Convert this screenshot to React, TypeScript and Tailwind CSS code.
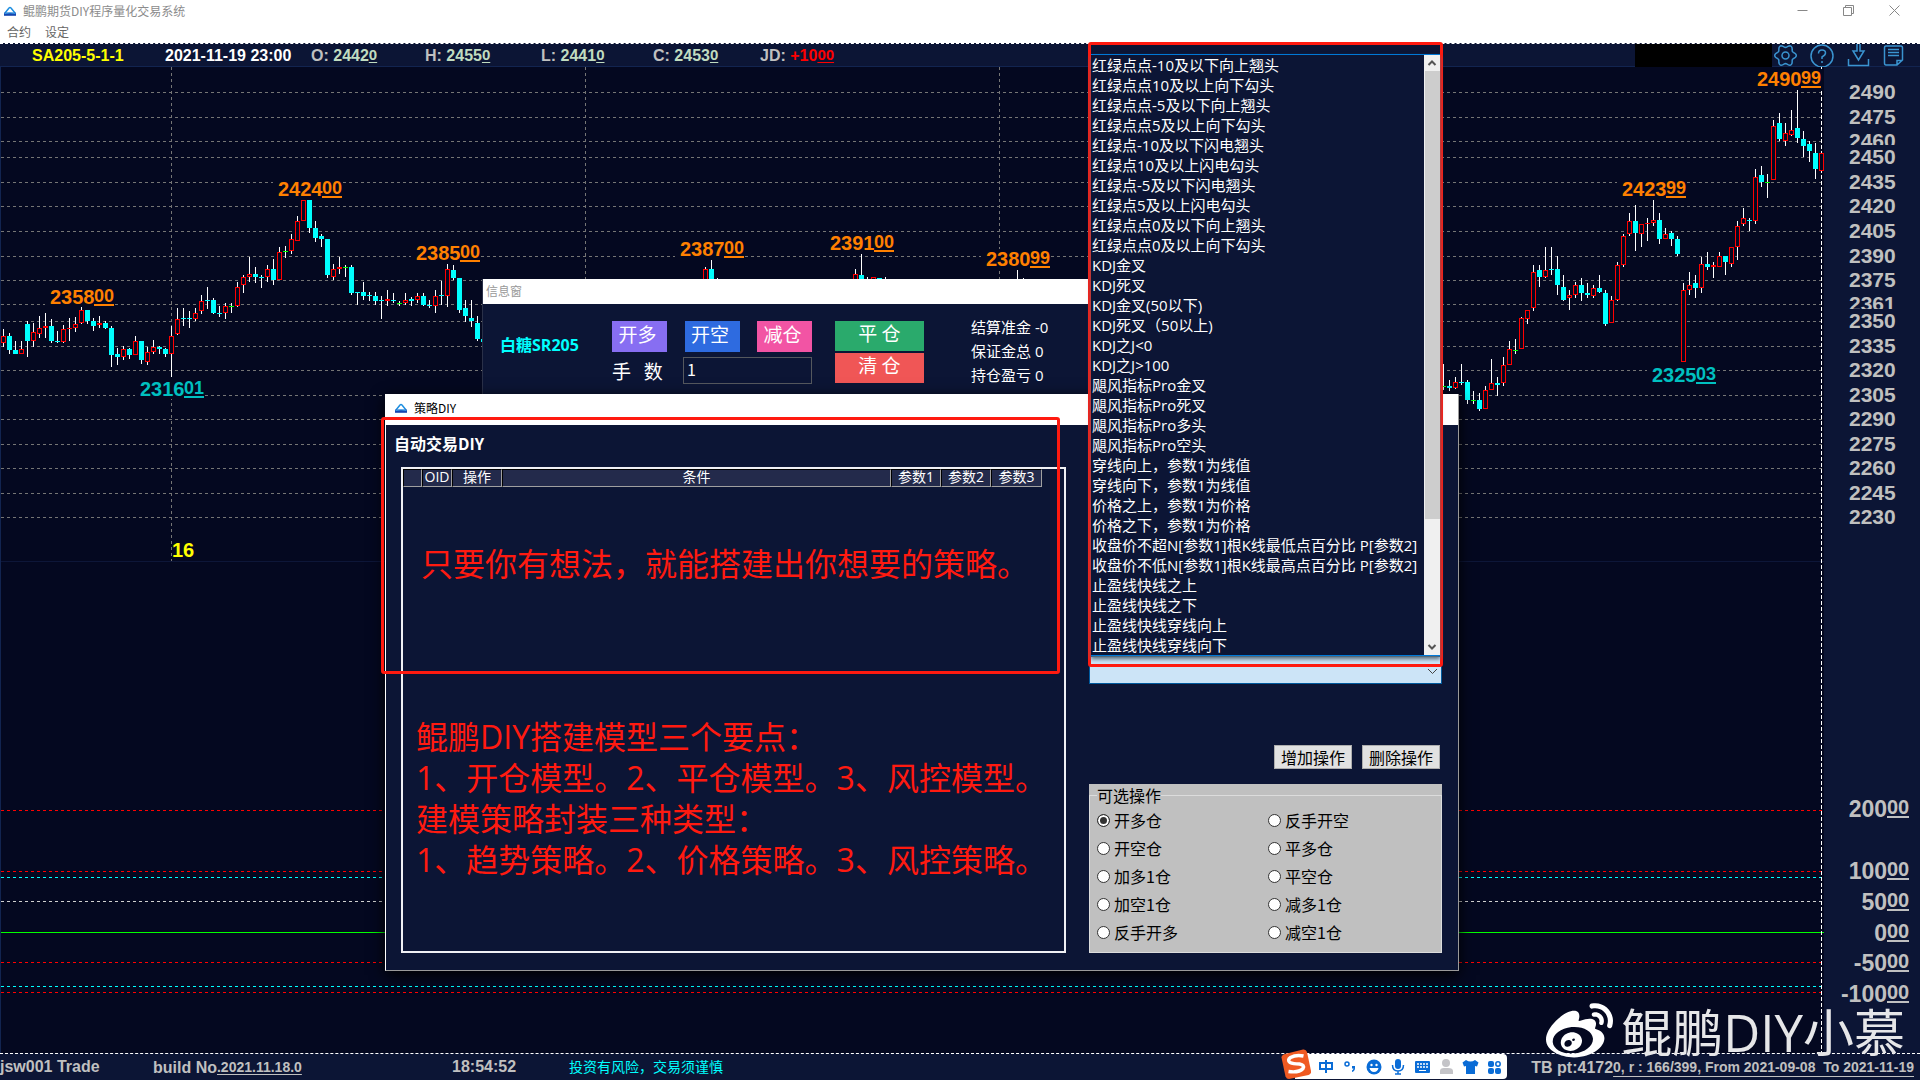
import { useState } from "react";
import { FaWeibo } from "react-icons/fa";

const CJK = "font-['Open_Sans','Noto_Sans_CJK_SC',sans-serif]";
const SANS_CJK = "font-['Noto_Sans_CJK_SC',sans-serif]";
const ARIAL = "font-['Liberation_Sans','Noto_Sans_CJK_SC',sans-serif]";

const CHART_TOP = 67;
const STEP = 6;

type Kind = "r" | "c" | "g";
// high, body top, body bottom, low (three units per pixel, from the window top)
type Candle = [Kind, number, number, number, number];

const leftRun: Candle[] = [
  ["r", 987, 1008, 1030, 1040],
  ["c", 1000, 1008, 1050, 1062],
  ["c", 1023, 1050, 1062, 1062],
  ["r", 1023, 1048, 1062, 1062],
  ["c", 963, 972, 1022, 1070],
  ["r", 968, 996, 1022, 1042],
  ["r", 948, 984, 1001, 1014],
  ["r", 938, 978, 984, 1014],
  ["c", 957, 978, 1023, 1028],
  ["c", 993, 1022, 1026, 1030],
  ["r", 975, 987, 1026, 1030],
  ["r", 955, 984, 988, 1022],
  ["r", 952, 972, 984, 996],
  ["r", 922, 930, 970, 972],
  ["c", 930, 930, 963, 972],
  ["c", 955, 963, 978, 993],
  ["r", 948, 968, 976, 984],
  ["c", 962, 969, 984, 987],
  ["c", 978, 984, 1065, 1100],
  ["c", 1043, 1062, 1070, 1095],
  ["r", 1038, 1047, 1070, 1080],
  ["c", 1045, 1047, 1065, 1078],
  ["r", 1008, 1022, 1065, 1066],
  ["c", 1022, 1022, 1080, 1092],
  ["r", 1040, 1056, 1085, 1094],
  ["r", 1020, 1041, 1056, 1062],
  ["c", 1037, 1041, 1046, 1062],
  ["c", 1045, 1047, 1061, 1070],
  ["r", 978, 1008, 1061, 1131],
  ["r", 924, 957, 1001, 1006],
  ["c", 924, 954, 957, 978],
  ["c", 933, 954, 957, 984],
  ["r", 924, 938, 957, 963],
  ["r", 885, 902, 933, 942],
  ["c", 861, 900, 903, 928],
  ["c", 893, 900, 940, 942],
  ["c", 918, 938, 942, 950],
  ["r", 908, 918, 940, 957],
  ["g", 908, 918, 920, 938],
  ["r", 846, 861, 918, 922],
  ["r", 825, 831, 854, 879],
  ["r", 770, 822, 831, 846],
  ["c", 800, 822, 831, 848],
  ["c", 825, 830, 833, 865],
  ["r", 794, 807, 831, 845],
  ["c", 776, 807, 840, 854],
  ["r", 741, 756, 840, 840],
  ["g", 738, 753, 755, 775],
  ["r", 702, 717, 753, 762],
  ["r", 648, 663, 722, 722],
  ["r", 600, 600, 662, 662],
  ["c", 600, 600, 684, 700],
  ["c", 663, 684, 714, 726],
  ["c", 702, 708, 717, 740],
  ["c", 717, 717, 825, 833],
  ["r", 792, 807, 830, 840],
  ["r", 770, 800, 807, 822],
  ["g", 794, 801, 803, 830],
  ["c", 794, 801, 879, 885],
  ["c", 875, 876, 879, 916],
  ["c", 846, 877, 887, 900],
  ["c", 877, 885, 889, 903],
  ["c", 876, 887, 903, 916],
  ["c", 888, 900, 903, 957],
  ["r", 870, 898, 903, 918],
  ["c", 880, 901, 903, 908],
  ["g", 903, 910, 912, 918],
  ["r", 878, 900, 908, 916],
  ["c", 890, 898, 902, 918],
  ["r", 879, 887, 900, 908],
  ["c", 880, 889, 916, 918],
  ["c", 900, 914, 918, 925],
  ["r", 870, 888, 918, 938],
  ["c", 843, 885, 888, 915],
  ["r", 792, 808, 888, 922],
  ["c", 795, 809, 834, 839],
  ["c", 834, 834, 930, 938],
  ["c", 900, 924, 948, 965],
  ["c", 900, 954, 963, 980],
  ["c", 948, 969, 1018, 1022],
  ["c", 1016, 1018, 1026, 1030],
];

const firstPeak: Candle[] = [
  ["r", 801, 808, 860, 860],
  ["c", 780, 807, 860, 860],
  ["c", 834, 846, 860, 860],
];

const secondPeak: Candle[] = [
  ["r", 807, 823, 860, 860],
  ["c", 762, 825, 860, 860],
  ["c", 831, 846, 860, 860],
  ["r", 831, 831, 860, 860],
  ["c", 834, 834, 860, 860],
  ["c", 831, 846, 860, 860],
];

const thirdPeak: Candle[] = [
  ["c", 810, 846, 860, 860],
  ["c", 834, 846, 860, 860],
];

const rightRun: Candle[] = [
  ["g", 1092, 1158, 1161, 1170],
  ["c", 1140, 1157, 1164, 1172],
  ["r", 1131, 1146, 1163, 1166],
  ["c", 1092, 1145, 1149, 1156],
  ["c", 1140, 1146, 1200, 1212],
  ["g", 1173, 1200, 1203, 1212],
  ["c", 1179, 1200, 1227, 1232],
  ["r", 1158, 1170, 1226, 1228],
  ["r", 1077, 1149, 1169, 1170],
  ["c", 1131, 1149, 1156, 1188],
  ["r", 1070, 1096, 1148, 1158],
  ["r", 1022, 1048, 1094, 1096],
  ["g", 1017, 1050, 1053, 1062],
  ["r", 950, 954, 1046, 1048],
  ["r", 930, 930, 956, 972],
  ["r", 795, 816, 923, 932],
  ["c", 795, 809, 832, 860],
  ["r", 741, 810, 831, 834],
  ["c", 741, 806, 809, 825],
  ["c", 768, 807, 855, 885],
  ["c", 825, 861, 900, 903],
  ["r", 870, 885, 893, 930],
  ["r", 846, 855, 885, 893],
  ["c", 833, 855, 879, 903],
  ["c", 849, 878, 885, 893],
  ["r", 855, 864, 887, 893],
  ["c", 825, 864, 876, 879],
  ["c", 870, 879, 972, 978],
  ["r", 887, 901, 968, 970],
  ["r", 786, 795, 900, 903],
  ["r", 702, 708, 794, 800],
  ["r", 640, 663, 702, 708],
  ["c", 615, 663, 699, 753],
  ["r", 672, 672, 702, 741],
  ["r", 654, 669, 672, 723],
  ["r", 600, 660, 669, 678],
  ["c", 640, 660, 717, 732],
  ["r", 684, 702, 717, 718],
  ["c", 693, 699, 717, 738],
  ["c", 708, 717, 762, 768],
  ["r", 848, 870, 1085, 1086],
  ["r", 816, 855, 870, 885],
  ["c", 825, 849, 864, 893],
  ["r", 770, 792, 863, 878],
  ["c", 756, 791, 801, 810],
  ["r", 786, 795, 801, 834],
  ["r", 756, 768, 801, 801],
  ["c", 768, 768, 786, 825],
  ["r", 741, 741, 792, 800],
  ["r", 663, 678, 740, 780],
  ["r", 624, 654, 671, 678],
  ["c", 654, 660, 663, 693],
  ["r", 507, 531, 662, 671],
  ["c", 498, 525, 546, 560],
  ["g", 522, 547, 549, 594],
  ["r", 360, 378, 540, 540],
  ["c", 339, 369, 417, 423],
  ["r", 369, 399, 423, 438],
  ["r", 330, 390, 405, 408],
  ["c", 270, 384, 414, 429],
  ["c", 393, 417, 438, 471],
  ["c", 423, 432, 453, 486],
  ["c", 429, 459, 507, 537],
  ["r", 459, 459, 513, 513],
];

const runs = [
  { start: 0, candles: leftRun },
  { start: 117, candles: firstPeak },
  { start: 142, candles: secondPeak },
  { start: 169, candles: thirdPeak },
  { start: 240, candles: rightRun },
];

const priceLines = [
  { y: 92, label: "2490" },
  { y: 117, label: "2475" },
  { y: 141, label: "2460" },
  { y: 157, label: "2450" },
  { y: 182, label: "2435" },
  { y: 206, label: "2420" },
  { y: 231, label: "2405" },
  { y: 256, label: "2390" },
  { y: 280, label: "2375" },
  { y: 304, label: "2361" },
  { y: 321, label: "2350" },
  { y: 346, label: "2335" },
  { y: 370, label: "2320" },
  { y: 395, label: "2305" },
  { y: 419, label: "2290" },
  { y: 444, label: "2275" },
  { y: 468, label: "2260" },
  { y: 493, label: "2245" },
  { y: 517, label: "2230" },
];

const levels = [
  { y: 810, color: "#ff0000" },
  { y: 871, color: "#ff0000" },
  { y: 877, color: "#00ffff" },
  { y: 901, color: "#d0d0d0" },
  { y: 932, color: "#00ff00", solid: true },
  { y: 962, color: "#ff0000" },
  { y: 986, color: "#00ffff" },
  { y: 992, color: "#ff0000" },
];

const levelLabels = [
  { y: 817, main: "200" },
  { y: 879, main: "100" },
  { y: 910, main: "50" },
  { y: 941, main: "0" },
  { y: 971, main: "-50" },
  { y: 1002, main: "-100" },
];

const marks = [
  { x: 50, y: 304, main: "2358", rest: "00" },
  { x: 140, y: 396, main: "2316", rest: "01", low: true },
  { x: 278, y: 196, main: "2424", rest: "00" },
  { x: 416, y: 260, main: "2385", rest: "00" },
  { x: 680, y: 256, main: "2387", rest: "00" },
  { x: 830, y: 250, main: "2391", rest: "00" },
  { x: 986, y: 266, main: "2380", rest: "99" },
  { x: 1622, y: 196, main: "2423", rest: "99" },
  { x: 1652, y: 382, main: "2325", rest: "03", low: true },
  { x: 1757, y: 86, main: "2490", rest: "99" },
];

const conditions = [
  "红绿点点-10及以下向上翘头",
  "红绿点点10及以上向下勾头",
  "红绿点点-5及以下向上翘头",
  "红绿点点5及以上向下勾头",
  "红绿点-10及以下闪电翘头",
  "红绿点10及以上闪电勾头",
  "红绿点-5及以下闪电翘头",
  "红绿点5及以上闪电勾头",
  "红绿点点0及以下向上翘头",
  "红绿点点0及以上向下勾头",
  "KDJ金叉",
  "KDJ死叉",
  "KDJ金叉(50以下)",
  "KDJ死叉（50以上)",
  "KDJ之J<0",
  "KDJ之J>100",
  "飓风指标Pro金叉",
  "飓风指标Pro死叉",
  "飓风指标Pro多头",
  "飓风指标Pro空头",
  "穿线向上，参数1为线值",
  "穿线向下，参数1为线值",
  "价格之上，参数1为价格",
  "价格之下，参数1为价格",
  "收盘价不超N[参数1]根K线最低点百分比 P[参数2]",
  "收盘价不低N[参数1]根K线最高点百分比 P[参数2]",
  "止盈线快线之上",
  "止盈线快线之下",
  "止盈线快线穿线向上",
  "止盈线快线穿线向下",
];

const operations = [
  "开多仓",
  "反手开空",
  "开空仓",
  "平多仓",
  "加多1仓",
  "平空仓",
  "加空1仓",
  "减多1仓",
  "反手开多",
  "减空1仓",
];

// six-lobed cog outline
const cogPoints = Array.from({ length: 72 }, (_, i) => {
  const angle = (i * Math.PI) / 36;
  const radius = 9.4 + 1.4 * Math.cos(6 * angle);
  return `${(11.5 + radius * Math.cos(angle)).toFixed(2)},${(11.5 + radius * Math.sin(angle)).toFixed(2)}`;
}).join(" ");

const AppIcon = () => (
  <svg className="size-3 shrink-0" viewBox="0 0 12 12" aria-hidden="true">
    <path d="M1 8L5 3Q6 2 7 3L11 8" stroke="#1e8fe0" strokeWidth="1.5" fill="none" />
    <path d="M0 7.6 H12 V10.8 H0 Z" fill="#1546b0" />
    <path d="M0.5 8.4 Q6 7.2 11.5 8.4" stroke="#3aa8f0" fill="none" />
  </svg>
);

const Candles = ({ start, candles }: { start: number; candles: Candle[] }) => (
  <>
    {candles.map(([kind, high, top, bottom, low], i) => {
      const x = 3 + (start + i) * STEP;
      const y = (v: number) => Math.round(v / 3) - CHART_TOP;
      const height = Math.max(1, y(bottom) - y(top));
      return (
        <g key={start + i}>
          <rect x={x} y={y(high)} width={1} height={Math.max(1, y(low) - y(high))} fill="#fff" />
          {kind === "r" && height > 1 ? (
            <rect x={x - 1.5} y={y(top) + 0.5} width={4} height={height - 1 || 1} fill="#040820" stroke="#f00" />
          ) : (
            <rect
              x={x - 2}
              y={y(top)}
              width={5}
              height={height}
              fill={kind === "c" ? "#0ff" : kind === "g" ? "#0f0" : "#f00"}
            />
          )}
        </g>
      );
    })}
  </>
);

const TitleBar = () => (
  <div className={`bg-white h-[43px] ${SANS_CJK} text-xs`}>
    <div className="h-[21px] flex items-center justify-between pl-1 pr-5 text-[#8c8c8c]">
      <div className="flex items-center gap-[7px]">
        <AppIcon />
        <h1>鲲鹏期货DIY程序量化交易系统</h1>
      </div>
      <div className="flex items-center gap-[35px]">
        <button aria-label="最小化">
          <svg className="size-[11px]" viewBox="0 0 11 11" fill="none" stroke="#888">
            <path d="M0.5 5.5H10.5" />
          </svg>
        </button>
        <button aria-label="还原">
          <svg className="size-[11px]" viewBox="0 0 11 11" fill="none" stroke="#888">
            <path d="M0.5 2.5H8.5V10.5H0.5ZM2.5 2.5V0.5H10.5V8.5H8.5" />
          </svg>
        </button>
        <button aria-label="关闭">
          <svg className="size-[11px]" viewBox="0 0 11 11" fill="none" stroke="#888">
            <path d="M0.5 0.5L10.5 10.5M10.5 0.5L0.5 10.5" />
          </svg>
        </button>
      </div>
    </div>
    <nav className="flex gap-3.5 pl-[7px] pt-[3px] text-[#666]">
      <button>合约</button>
      <button>设定</button>
    </nav>
  </div>
);

const Quote = ({ name, value, rest }: { name: string; value: string; rest: string }) => (
  <span className="text-[#c0c0c0]">
    {name}: <span className={name === "JD" ? "text-[#ff0000]" : "text-[#c0dcc0]"}>
      {value}
      <span className="text-[15px] align-[1px] underline underline-offset-2">{rest}</span>
    </span>
  </span>
);

const QuoteBar = () => (
  <header
    className={`h-6 flex items-center bg-[#0c1535] border-t border-dashed border-t-white shadow-[inset_0_-1px_0_#122450] ${ARIAL} text-base leading-5 font-bold whitespace-nowrap`}
  >
    <span className="w-[165px] pl-8 text-[#ffff00]">SA205-5-1-1</span>
    <span className="w-[146px] text-white">2021-11-19 23:00</span>
    <span className="w-[114px]">
      <Quote name="O" value="2442" rest="0" />
    </span>
    <span className="w-[116px]">
      <Quote name="H" value="2455" rest="0" />
    </span>
    <span className="w-28">
      <Quote name="L" value="2441" rest="0" />
    </span>
    <span className="w-[107px]">
      <Quote name="C" value="2453" rest="0" />
    </span>
    <Quote name="JD" value="+10" rest="00" />
    <div className="ml-auto w-[137px] h-[23px] bg-black" />
    <div className="w-[148px] flex items-center justify-between pl-0.5 pr-4">
      <button aria-label="设置">
        <svg className="size-[23px]" viewBox="0 0 23 23" fill="none" stroke="#3a94d0" strokeWidth="1.5">
          <polygon points={cogPoints} />
          <circle cx="11.5" cy="11.5" r="3.5" />
        </svg>
      </button>
      <button aria-label="帮助">
        <svg className="size-6" viewBox="0 0 24 24" fill="none" stroke="#3a94d0" strokeWidth="1.5">
          <circle cx="12" cy="12" r="11" />
          <path d="M8.5 9.5 Q8.5 6 12 6 Q15.5 6 15.5 9 Q15.5 11 12 13 V15 M12 17V19" />
        </svg>
      </button>
      <button aria-label="下载">
        <svg className="size-[23px]" viewBox="0 0 23 23" fill="none" stroke="#3a94d0" strokeWidth="1.5">
          <path d="M1.5 15 V21.5 H21.5 V15 M10 0 V7 H6 L11.5 16 L17 7 H13 V0" />
        </svg>
      </button>
      <button aria-label="日志">
        <svg className="size-[21px]" viewBox="0 0 21 21" fill="none" stroke="#3a94d0" strokeWidth="1.5">
          <path d="M3 1 H18 Q19.5 1 19.5 3 V15 L14 20 H3 Q1.5 20 1.5 18 V3 Q1.5 1 3 1 Z M14 20 V15.5 H19.5 M5 4.5 H16 M5 7.5 H16 M5 10.5 H16" />
        </svg>
      </button>
    </div>
  </header>
);

const Chart = () => (
  <main className={`flex-1 flex ${ARIAL} font-bold`}>
    <svg className="flex-1 min-w-0 bg-[#040820] border-l border-[#122450]" aria-label="K线图">
      <g stroke="#757575" strokeDasharray="3 3">
        {priceLines.map(({ y }) => (
          <line key={y} x1={0} x2="100%" y1={y - CHART_TOP + 0.5} y2={y - CHART_TOP + 0.5} />
        ))}
        {[171, 585, 999].map((x) => (
          <line key={x} x1={x - 0.5} x2={x - 0.5} y1={0} y2={494} />
        ))}
      </g>
      <line x1={0} x2="100%" y1={494.5} y2={494.5} stroke="#0d1638" />
      {levels.map(({ y, color, solid }) => (
        <line
          key={y}
          x1={0}
          x2="100%"
          y1={y - CHART_TOP + 0.5}
          y2={y - CHART_TOP + 0.5}
          stroke={color}
          strokeDasharray={solid ? undefined : "3 3"}
        />
      ))}
      <line x1={1820.5} x2={1820.5} y1={0} y2="100%" stroke="#fff" strokeDasharray="4 2" />
      {marks.map(({ x, y, main, rest, low }) => (
        <g key={x} fill={low ? "#00c0c0" : "#ff8000"}>
          <rect x={x - 6} y={y - CHART_TOP - 17} width={70} height={20} fill="#040820" />
          <text x={x - 1} y={y - CHART_TOP} fontSize={20}>
            {main}
          </text>
          <text x={x + 43} y={y - CHART_TOP - 2} fontSize={18}>
            {rest}
          </text>
          <rect x={x + 43} y={y - CHART_TOP} width={20} height={2} />
        </g>
      ))}
      <g transform="translate(-1 0)">
        {runs.map((run) => (
          <Candles key={run.start} {...run} />
        ))}
      </g>
      <text x={171} y={490} fontSize={20} fill="#ffff00">
        16
      </text>
    </svg>
    <svg className="w-24 bg-[#0c1535]" fill="#c0c0c0" aria-label="价格轴">
      {priceLines.map(({ y, label }) => (
        <g key={y}>
          <rect x={20} y={y - CHART_TOP - 12} width={60} height={24} fill="#0c1535" />
          <text x={25} y={y - CHART_TOP + 7} fontSize={21}>
            {label}
          </text>
        </g>
      ))}
      {levelLabels.map(({ y, main }) => (
        <g key={y}>
          <text x={63} y={y - CHART_TOP} fontSize={23} textAnchor="end">
            {main}
          </text>
          <text x={63} y={y - CHART_TOP - 3} fontSize={20}>
            00
          </text>
          <rect x={63} y={y - CHART_TOP - 1} width={22} height={2} />
        </g>
      ))}
    </svg>
  </main>
);

const StatusBar = () => (
  <footer
    className={`h-[27px] flex items-center bg-[#0c1535] border-t border-dashed border-t-white ${ARIAL} text-base leading-5 font-bold text-[#c0c0c0] whitespace-nowrap`}
  >
    <span className="w-[153px]">jsw001 Trade</span>
    <span className="w-[299px]">
      build No<span className="text-sm align-[1px] underline underline-offset-2">.2021.11.18.0</span>
    </span>
    <span className="w-[117px]">18:54:52</span>
    <span className="text-sm font-normal text-[#00ffff]">投资有风险，交易须谨慎</span>
    <span className="ml-auto pr-1.5 whitespace-pre">
      TB pt:4172
      <span className="text-sm align-[1px] underline underline-offset-4">
        {"0, r : 166/399, From 2021-09-08  To 2021-11-19"}
      </span>
    </span>
  </footer>
);

const InfoWindow = () => (
  <section className={`absolute left-[482px] top-[279px] w-[720px] bg-[#0c1535] border-l border-[#2a3048] ${SANS_CJK} text-white`}>
    <h2 className="h-[25px] pl-[3px] bg-white text-xs leading-[23px] text-[#999]">信息窗</h2>
    <div className="h-[90px] flex items-start pt-[17px] pl-[17px]">
      <span className={`w-28 pt-3 text-base font-bold text-[#00ffff] ${CJK}`}>白糖SR205</span>
      <div className="w-[200px] mr-[23px]">
        <div className="flex justify-between">
          <button className="w-[55px] h-[31px] pb-1.5 pr-1 bg-[#876ef2] text-[19px] leading-6">开多</button>
          <button className="w-[55px] h-[31px] pb-1.5 pr-1 bg-[#2e6be0] text-[19px] leading-6">开空</button>
          <button className="w-[55px] h-[31px] pb-1.5 pr-1 bg-[#f254a4] text-[19px] leading-6">减仓</button>
        </div>
        <div className="flex items-center justify-between mt-[3px]">
          <label htmlFor="lots" className="pt-0.5 text-[19px] leading-7 whitespace-pre">
            手   数
          </label>
          <input
            id="lots"
            defaultValue="1"
            className="w-[129px] h-[27px] px-[3px] pb-0.5 border border-[#55585e] bg-[#0c1535] text-base"
          />
        </div>
      </div>
      <div className="flex flex-col gap-0.5">
        <button className="w-[89px] h-[30px] pb-1.5 bg-[#2aaa6c] text-[19px] leading-6">平 仓</button>
        <button className="w-[89px] h-[30px] pb-1.5 bg-[#f05656] text-[19px] leading-6">清 仓</button>
      </div>
      <div className={`ml-[47px] -mt-1.5 text-[15px] leading-6 ${CJK}`}>
        <p>结算准金 -0</p>
        <p>保证金总 0</p>
        <p>持仓盈亏 0</p>
      </div>
    </div>
  </section>
);

const RuleTable = () => {
  const columns = [
    { name: "", width: "w-[19px]" },
    { name: "OID", width: "w-[30px]" },
    { name: "操作", width: "w-[50px]" },
    { name: "条件", width: "w-[389px]" },
    { name: "参数1", width: "w-[50px]" },
    { name: "参数2", width: "w-[50px]" },
    { name: "参数3", width: "w-[51px]" },
  ];
  return (
    <table className="w-[639px] table-fixed border-separate border-spacing-0">
      <thead>
        <tr>
          {columns.map(({ name, width }) => (
            <th
              key={name}
              className={`${width} h-[18px] p-0 pb-0.5 bg-[#232a4b] border border-t-black border-l-black border-r-[#a0a0a0] border-b-[#a0a0a0] text-sm leading-[14px] font-normal text-white whitespace-nowrap`}
            >
              {name}
            </th>
          ))}
        </tr>
      </thead>
    </table>
  );
};

const StrategyDialog = () => {
  const [operation, setOperation] = useState("开多仓");

  return (
    <section
      className={`absolute left-[385px] top-[394px] w-[1074px] h-[577px] flex flex-col bg-[#0c1535] border border-t-0 border-l-white border-r-[#9a9a9a] border-b-[#9a9a9a] shadow-[0_4px_14px_#000] ${SANS_CJK}`}
    >
      <div className="h-[31px] flex items-center gap-[7px] pl-[9px] pb-[3px] bg-white text-xs text-black">
        <AppIcon />
        <h2>策略DIY</h2>
      </div>
      <div className="flex-1 flex justify-between pr-4 pb-[17px]">
        <div className="w-[680px] flex flex-col">
          <h3 className="h-[42px] pl-2 pt-1.5 text-base font-bold text-white">自动交易DIY</h3>
          <div
            className={`flex-1 ml-[15px] border-2 border-[#f0f0f4] text-[32px] leading-[41px] text-[#ff1a10] whitespace-nowrap ${CJK}`}
          >
            <RuleTable />
            <p className="pt-14 pl-[18px]">只要你有想法，就能搭建出你想要的策略。</p>
            <div className="pt-[132px] pl-[13px]">
              <p>鲲鹏DIY搭建模型三个要点：</p>
              <p>1、开仓模型。2、平仓模型。3、风控模型。</p>
              <p>建模策略封装三种类型：</p>
              <p>1、趋势策略。2、价格策略。3、风控策略。</p>
            </div>
          </div>
        </div>
        <div className="w-[353px] flex flex-col justify-end text-base text-black">
          <div className="relative">
            <select
              aria-label="条件"
              className="block w-full h-7 appearance-none rounded-none border border-[#005a9e] bg-[#cce4f7]"
            />
            <svg
              className="absolute right-1 top-3 w-[11px] h-[7px] pointer-events-none"
              viewBox="0 0 11 7"
              fill="none"
              stroke="#444"
            >
              <path d="M1 1L5.5 5.5L10 1" />
            </svg>
          </div>
          <div className="mt-[61px] mb-[15px] pr-0.5 flex justify-end gap-2.5 leading-5">
            <button className="w-[78px] h-6 border border-[#adadad] bg-[#e1e1e1]">增加操作</button>
            <button className="w-[78px] h-6 border border-[#adadad] bg-[#e1e1e1]">删除操作</button>
          </div>
          <div className="h-[169px] bg-[#c0c0c0]">
            <fieldset className="h-full border border-[#dcdcdc] px-[7px] leading-[22px]">
              <legend>可选操作</legend>
              <div className="grid grid-cols-[171px_1fr]">
                {operations.map((name) => (
                  <label key={name} className="h-7 flex items-center gap-1">
                    <input
                      type="radio"
                      name="operation"
                      checked={operation === name}
                      onChange={() => setOperation(name)}
                      className="size-[13px] appearance-none rounded-full border border-[#333] bg-white checked:bg-[#333] checked:shadow-[inset_0_0_0_2px_#fff]"
                    />
                    {name}
                  </label>
                ))}
              </div>
            </fieldset>
          </div>
        </div>
      </div>
    </section>
  );
};

const ConditionList = () => (
  <div className={`absolute left-[1088px] top-[42px] w-[355px] h-[625px] border-[3px] border-[#ff1a10] rounded-[3px] ${CJK}`}>
    <div className="h-[9px] bg-[#0c1535]" />
    <div className="flex bg-[#0c1535] border-y border-[#0078d7] shadow-[0_3px_4px_#5a6a78]">
      <ul role="listbox" aria-label="条件列表" className="flex-1 pl-px text-[15px] leading-5 text-white whitespace-nowrap">
        {conditions.map((name) => (
          <li key={name} role="option" aria-selected={false}>
            {name}
          </li>
        ))}
      </ul>
      <div className="w-4 flex flex-col items-center bg-[#f0f0f0]">
        <svg className="w-2.5 h-4" viewBox="0 0 10 16" fill="none" stroke="#555" strokeWidth="2">
          <path d="M1.5 10L5 6.5L8.5 10" />
        </svg>
        <div className="w-[15px] h-[448px] bg-[#cdcdcd]" />
        <svg className="w-2.5 h-4 mt-auto" viewBox="0 0 10 16" fill="none" stroke="#555" strokeWidth="2">
          <path d="M1.5 6L5 9.5L8.5 6" />
        </svg>
      </div>
    </div>
  </div>
);

const InputMethodBar = () => (
  <div className="absolute left-[1281px] bottom-px w-[226px] h-[30px] flex items-end">
    <div className="ml-[14px] w-[212px] h-[25px] rounded-r bg-white">
      <svg className="w-[212px] h-[25px]" viewBox="0 0 212 25" fill="#0a6cd6" aria-hidden="true">
        <path d="M31 6V19M25 9H37V15H25Z" fill="none" stroke="#0a6cd6" strokeWidth="2" />
        <circle cx="52" cy="10" r="2" fill="none" stroke="#0a6cd6" strokeWidth="1.5" />
        <path d="M57 12h3v2q0 3-3 4v-1.5q1.5-1 1.5-2H57z" />
        <circle cx="79" cy="13" r="7.5" />
        <circle cx="76.5" cy="11" r="1.2" fill="#fff" />
        <circle cx="81.5" cy="11" r="1.2" fill="#fff" />
        <path d="M74.5 14H83.5Q82.5 18 79 18Q75.5 18 74.5 14Z" fill="#fff" />
        <rect x="100" y="5" width="6" height="10" rx="3" />
        <path d="M97.5 11Q97.5 17 103 17Q108.5 17 108.5 11M103 17V20M100 20H106" fill="none" stroke="#0a6cd6" strokeWidth="1.5" />
        <rect x="120" y="7" width="15" height="12" rx="1" />
        <path d="M122 10H133M122 13H133" stroke="#fff" strokeWidth="1.5" strokeDasharray="2 1" />
        <path d="M124 16.5H131" stroke="#fff" />
        <circle cx="151" cy="9" r="4" fill="#c4c4c8" />
        <path d="M145 20V17Q145 14 149 14H153Q158 14 158 17V20Z" fill="#c4c4c8" />
        <path d="M171 6Q175.5 9 180 6L183.5 8.5L182 12.5L180 12V20H171V12L169 12.5L167.5 8.5Z" />
        <rect x="193" y="7" width="6" height="6" rx="2" />
        <rect x="193" y="14" width="6" height="6" rx="2" />
        <rect x="200" y="14" width="6" height="6" rx="2" />
        <circle cx="203" cy="10" r="2.2" fill="none" stroke="#0a6cd6" strokeWidth="1.5" />
      </svg>
    </div>
    <svg className="absolute left-0 top-0 size-[30px]" viewBox="0 0 30 30" aria-hidden="true">
      <path d="M4 5L22 0.5Q25 0 26 3L30 22Q30.5 25 27.5 26L8 30Q5.5 30 4.5 27.5L0.5 8.5Q0.5 6 4 5Z" fill="#f05a22" />
      <path d="M22.5 7Q15 5.5 9.5 8.5Q6 11 9 13.5Q12 15 18.5 15Q24 16 22 19.5Q18 24 7.5 22.5" fill="none" stroke="#fff" strokeWidth="3.5" />
    </svg>
  </div>
);

const Watermark = () => (
  <div className={`absolute right-[15px] bottom-5 flex items-center gap-2 ${CJK} text-[51px] leading-[56px] text-[#e6e6e8] whitespace-nowrap`}>
    <FaWeibo className="size-[67px] -my-2 text-white" />
    <span>鲲鹏DIY小慕</span>
  </div>
);

const App = () => (
  <div className="relative min-h-screen flex flex-col overflow-hidden bg-[#040820]">
    <TitleBar />
    <QuoteBar />
    <Chart />
    <StatusBar />
    <InfoWindow />
    <StrategyDialog />
    <ConditionList />
    {/* highlight frame round the rule table */}
    <div className="absolute left-[381px] top-[417px] w-[679px] h-[257px] border-[3px] border-[#ff1a10] rounded-[3px] pointer-events-none" />
    <InputMethodBar />
    <Watermark />
  </div>
);

export default App;
